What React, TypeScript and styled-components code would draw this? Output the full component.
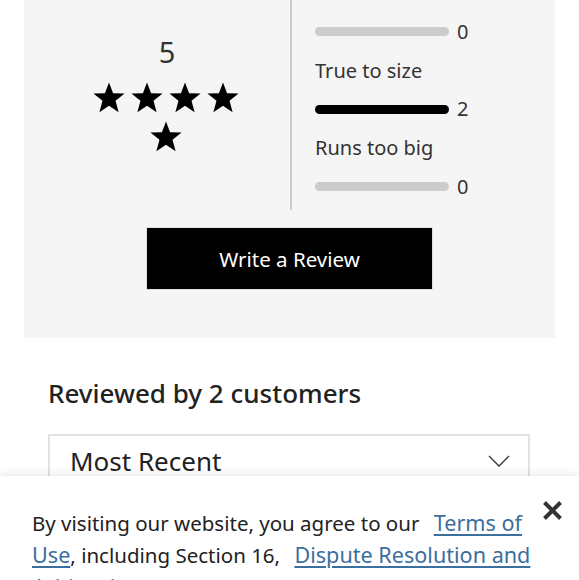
import React from "react";
import styled, { createGlobalStyle } from "styled-components";

const Global = createGlobalStyle`
  html, body { margin: 0; padding: 0; background: #fff; }
  body { font-family: "Noto Sans", "Open Sans", sans-serif; color: #222; overflow: hidden; }
  * { box-sizing: border-box; }
`;

const Page = styled.div`
  width: 579px;
  height: 580px;
  position: relative;
  overflow: hidden;
`;

const Panel = styled.section`
  margin: 0 24px;
  width: 531px;
  height: 338px;
  background: #f5f5f5;
  display: flex;
  flex-direction: column;
  align-items: center;
`;

const Summary = styled.div`
  display: flex;
  width: 100%;
  height: 210px;
`;

const RatingCol = styled.div`
  width: 266px;
  padding: 33px 0 0 17px;
  display: flex;
  flex-direction: column;
  align-items: center;
`;

const Score = styled.div`
  font-size: 29px;
  line-height: 38px;
  color: #333;
  padding-left: 3px;
`;

const Stars = styled.div`
  margin-top: 10px;
  width: 160px;
  display: flex;
  flex-wrap: wrap;
  justify-content: center;
  column-gap: 4px;
  row-gap: 5px;
`;

const FitCol = styled.div`
  flex: 1;
  border-left: 2px solid #cccccc;
  padding: 12px 0 4px 23px;
  display: flex;
  flex-direction: column;
`;

const BarRow = styled.div`
  height: 39px;
  display: flex;
  align-items: center;
  gap: 8px;
`;

const Bar = styled.div<{ $filled: boolean }>`
  width: 134px;
  height: 9px;
  border-radius: 5px;
  background: ${(p) => (p.$filled ? "#000" : "#cccccc")};
`;

const Count = styled.span`
  font-size: 20px;
  color: #333;
  line-height: 1;
`;

const FitLabel = styled.div`
  height: 38.5px;
  display: flex;
  align-items: center;
  font-size: 20px;
  color: #333;
`;

const WriteButton = styled.button`
  margin-top: 17px;
  width: 287px;
  height: 63px;
  background: #000;
  color: #fff;
  border: 1px solid #e0e0e0;
  font-family: inherit;
  font-size: 20.5px;
  cursor: pointer;
`;

const Heading = styled.h2`
  margin: 37px 0 0 48px;
  font-size: 26px;
  line-height: 36px;
  font-weight: 500;
  color: #222;
`;

const SortSelect = styled.div`
  margin: 23px 0 0 48px;
  width: 482px;
  height: 54px;
  border: 2px solid #e2e2e2;
  display: flex;
  align-items: center;
  justify-content: space-between;
  padding: 0 18px 0 20px;
  font-size: 26px;
  color: #222;
`;

const Banner = styled.div`
  position: absolute;
  left: 0;
  right: 0;
  top: 476px;
  bottom: 0;
  background: #fff;
  box-shadow: 0 -3px 8px rgba(0, 0, 0, 0.08);
  display: flex;
  align-items: flex-start;
  padding: 31px 14px 0 32px;
`;

const BannerText = styled.p`
  margin: 0;
  flex: 1;
  font-size: 20.5px;
  line-height: 32px;
  color: #222;
`;

const Link = styled.a`
  color: #3b6f9d;
  font-size: 21.6px;
  text-decoration: underline;
  text-underline-offset: 3px;
  margin-left: 9px;
`;

const LinkNoGap = styled(Link)`
  margin-left: 0;
`;

const Close = styled.button`
  margin: -10px 0 0 6px;
  width: 26px;
  height: 26px;
  padding: 0;
  border: none;
  background: transparent;
  display: flex;
  align-items: center;
  justify-content: center;
`;

const Star = () => (
  <svg width="34" height="34" viewBox="0 0 24 24">
    <polygon
      points="12,1 14.9,8.6 23,8.9 16.6,14 18.8,22 12,17.4 5.2,22 7.4,14 1,8.9 9.1,8.6"
      fill="#000"
    />
  </svg>
);

const fit = [
  { count: 0, label: "True to size" },
  { count: 2, label: "Runs too big" },
  { count: 0, label: null },
];

export default function App() {
  return (
    <Page>
      <Global />
      <Panel>
        <Summary>
          <RatingCol>
            <Score>5</Score>
            <Stars>
              {[0, 1, 2, 3, 4].map((i) => (
                <Star key={i} />
              ))}
            </Stars>
          </RatingCol>
          <FitCol>
            {fit.map((f, i) => (
              <React.Fragment key={i}>
                <BarRow>
                  <Bar $filled={f.count > 0} />
                  <Count>{f.count}</Count>
                </BarRow>
                {f.label && <FitLabel>{f.label}</FitLabel>}
              </React.Fragment>
            ))}
          </FitCol>
        </Summary>
        <WriteButton>Write a Review</WriteButton>
      </Panel>
      <Heading>Reviewed by 2 customers</Heading>
      <SortSelect>
        <span>Most Recent</span>
        <svg width="22" height="12" viewBox="0 0 22 12">
          <polyline points="1,1 11,11 21,1" fill="none" stroke="#333" strokeWidth="1.3" />
        </svg>
      </SortSelect>
      <Banner>
        <BannerText>
          By visiting our website, you agree to our <Link href="#">Terms of</Link>{" "}
          <LinkNoGap href="#">Use</LinkNoGap>, including Section 16, <Link href="#">Dispute Resolution and Arbitration</Link>. You also
          consent to the use of tracking technologies.
        </BannerText>
        <Close aria-label="Close">
          <svg width="21" height="21" viewBox="0 0 21 21">
            <path d="M2.5 2.5 L18.5 18.5 M18.5 2.5 L2.5 18.5" stroke="#333" strokeWidth="4" strokeLinecap="butt" />
          </svg>
        </Close>
      </Banner>
    </Page>
  );
}
